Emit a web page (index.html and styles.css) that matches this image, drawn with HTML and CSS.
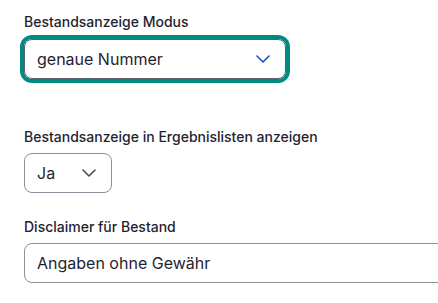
FILE: index.html
```html
<!DOCTYPE html>
<html lang="de">
  <head>
    <meta charset="UTF-8" />
    <meta name="viewport" content="width=device-width, initial-scale=1.0" />
    <title>Bestandsanzeige</title>
    <link rel="stylesheet" href="styles.css">
  </head>
  <body>
    <form class="settings">
      <div class="field field-wide">
        <label class="label">Bestandsanzeige Modus</label>
        <div class="select select-focus">
          <span class="value">genaue Nummer</span>
          <svg class="chevron" width="14" height="8" viewBox="0 0 14 8">
            <path d="M1 1l6 6 6-6" fill="none" stroke="currentColor" stroke-width="1.6" stroke-linecap="round" stroke-linejoin="round" />
          </svg>
        </div>
      </div>
      <div class="field field-tight">
        <label class="label">Bestandsanzeige in Ergebnislisten anzeigen</label>
        <div class="select select-small">
          <span class="value">Ja</span>
          <svg class="chevron" width="14" height="8" viewBox="0 0 14 8">
            <path d="M1 1l6 6 6-6" fill="none" stroke="currentColor" stroke-width="1.6" stroke-linecap="round" stroke-linejoin="round" />
          </svg>
        </div>
      </div>
      <div class="field">
        <label class="label">Disclaimer für Bestand</label>
        <div class="input">
          <span class="value">Angaben ohne Gewähr</span>
        </div>
      </div>
    </form>
  </body>
</html>
```

FILE: styles.css
```css
body {
  margin: 0;
  font-family: Inter, "Noto Sans", sans-serif;
  color: #1f2430;
  background: #fff;
  overflow: hidden;
}
.settings {
  display: flex;
  flex-direction: column;
  padding: 12px 0 12px 24px;
  overflow: hidden;
}
.field {
  display: flex;
  flex-direction: column;
  gap: 6px;
}
.field-wide {
  width: 262px;
  margin-bottom: 48px;
}
.field-tight {
  margin-bottom: 24px;
}
.label {
  font-size: 14px;
  line-height: 20px;
  font-weight: 500;
  color: #1f2430;
}
.select,
.input {
  display: flex;
  align-items: center;
  justify-content: space-between;
  box-sizing: border-box;
  height: 40px;
  padding: 0 15px 0 12px;
  border: 1px solid #8c8f99;
  border-radius: 8px;
  font-size: 16px;
  color: #1f2430;
}
.select-focus {
  margin-top: 1px;
  border-color: #5b5f69;
  box-shadow: 0 0 0 4px #008a80;
}
.select-focus .chevron {
  color: #1d4ed8;
}
.select-small {
  width: 88px;
}
.chevron {
  color: #4a4d55;
}
.input {
  margin-right: -24px;
}
```
